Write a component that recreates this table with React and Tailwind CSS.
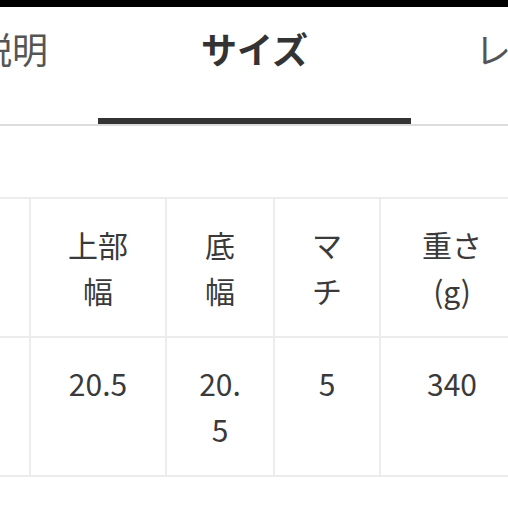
import React from "react";

const tabs = [
  { label: "商品説明", width: "w-[244px] -ml-[146px]", active: false },
  { label: "サイズ", width: "w-[313px]", active: true },
  { label: "レビュー", width: "w-[272px]", active: false },
];

const header = [["上部", "幅"], ["底", "幅"], ["マ", "チ"], ["重さ", "(g)"]];
const values = [["20.5"], ["20.", "5"], ["5"], ["340"]];
const colWidths = ["w-[136px]", "w-[108px]", "w-[106px]", "w-[144px]"];

function Cell({ lines, width }) {
  return (
    <div
      className={`${width} shrink-0 border-r-2 border-b-2 border-[#ececec] pt-[22px] pb-[23px] text-center text-[30px] leading-[46px] text-[#3a3a3a]`}
    >
      {lines.map((l, i) => (
        <div key={i}>{l}</div>
      ))}
    </div>
  );
}

export default function App() {
  return (
    <div
      className="w-[508px] h-[508px] overflow-hidden bg-white"
      style={{ fontFamily: '"Noto Sans CJK JP", "Noto Sans", sans-serif' }}
    >
      <div className="h-[7px] bg-black" />

      {/* tabs */}
      <div className="flex border-b-2 border-[#dcdcdc] overflow-hidden">
        {tabs.map((t) => (
          <div
            key={t.label}
            className={`${t.width} shrink-0 h-[117px] pt-[14px] text-center text-[36px] leading-[54px] whitespace-nowrap ${
              t.active
                ? "font-bold text-[#333] border-b-[6px] border-[#333]"
                : "text-[#555]"
            }`}
          >
            {t.label}
          </div>
        ))}
      </div>

      {/* size table */}
      <div className="mt-[71px] overflow-hidden">
        <div className="border-t-2 border-[#ececec] w-[525px]">
          <div className="flex">
            <div className="w-[31px] shrink-0 border-r-2 border-b-2 border-[#ececec]" />
            {header.map((h, i) => (
              <Cell key={i} lines={h} width={colWidths[i]} />
            ))}
          </div>
          <div className="flex">
            <div className="w-[31px] shrink-0 border-r-2 border-b-2 border-[#ececec]" />
            {values.map((v, i) => (
              <Cell key={i} lines={v} width={colWidths[i]} />
            ))}
          </div>
        </div>
      </div>
    </div>
  );
}
